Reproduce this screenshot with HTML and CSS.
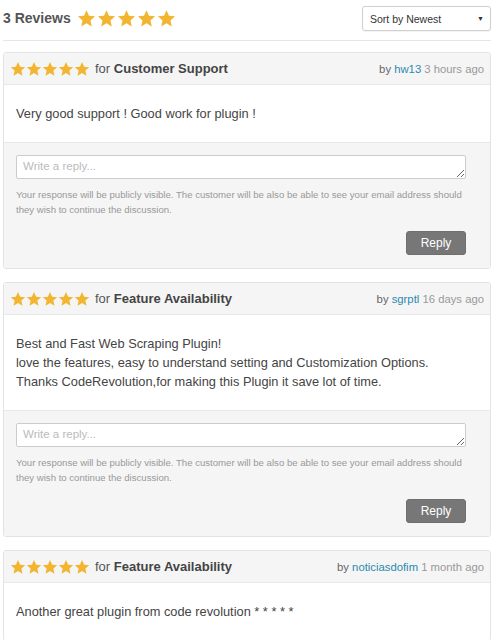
FILE: index.html
```html
<!DOCTYPE html>
<html>
<head>
<meta charset="utf-8">
<link rel="stylesheet" href="styles.css">
</head>
<body>
<svg width="0" height="0" class="defs"><defs><symbol id="star" viewBox="0 0 24 24"><polygon points="12,1.5 15.1,8.6 22.8,9.3 17,14.4 18.7,22 12,18 5.3,22 7,14.4 1.2,9.3 8.9,8.6" fill="#f1b52f"/></symbol></defs></svg>
<div class="page">
  <div class="top">
    <div class="summary">
      <span class="count">3 Reviews</span>
      <span class="stars big">
        <svg><use href="#star"/></svg><svg><use href="#star"/></svg><svg><use href="#star"/></svg><svg><use href="#star"/></svg><svg><use href="#star"/></svg>
      </span>
    </div>
    <div class="sort"><span>Sort by Newest</span><span class="caret">▼</span></div>
  </div>

  <div class="card">
    <div class="card-head">
      <div class="left">
        <span class="stars small"><svg><use href="#star"/></svg><svg><use href="#star"/></svg><svg><use href="#star"/></svg><svg><use href="#star"/></svg><svg><use href="#star"/></svg></span>
        <span class="for">for <b>Customer Support</b></span>
      </div>
      <div class="meta">by <a class="user">hw13</a> <span class="ago">3 hours ago</span></div>
    </div>
    <div class="card-body">Very good support ! Good work for plugin !</div>
    <div class="reply">
      <textarea placeholder="Write a reply..."></textarea>
      <p class="note">Your response will be publicly visible. The customer will be also be able to see your email address should they wish to continue the discussion.</p>
      <div class="actions"><button class="btn">Reply</button></div>
    </div>
  </div>

  <div class="card">
    <div class="card-head">
      <div class="left">
        <span class="stars small"><svg><use href="#star"/></svg><svg><use href="#star"/></svg><svg><use href="#star"/></svg><svg><use href="#star"/></svg><svg><use href="#star"/></svg></span>
        <span class="for">for <b>Feature Availability</b></span>
      </div>
      <div class="meta">by <a class="user">sgrptl</a> <span class="ago">16 days ago</span></div>
    </div>
    <div class="card-body">Best and Fast Web Scraping Plugin!<br>love the features, easy to understand setting and Customization Options.<br>Thanks CodeRevolution,for making this Plugin it save lot of time.</div>
    <div class="reply">
      <textarea placeholder="Write a reply..."></textarea>
      <p class="note">Your response will be publicly visible. The customer will be also be able to see your email address should they wish to continue the discussion.</p>
      <div class="actions"><button class="btn">Reply</button></div>
    </div>
  </div>

  <div class="card">
    <div class="card-head">
      <div class="left">
        <span class="stars small"><svg><use href="#star"/></svg><svg><use href="#star"/></svg><svg><use href="#star"/></svg><svg><use href="#star"/></svg><svg><use href="#star"/></svg></span>
        <span class="for">for <b>Feature Availability</b></span>
      </div>
      <div class="meta">by <a class="user">noticiasdofim</a> <span class="ago">1 month ago</span></div>
    </div>
    <div class="card-body">Another great plugin from code revolution * * * * *</div>
  </div>
</div>
</body>
</html>
```

FILE: styles.css
```css
html, body {
  margin: 0;
  padding: 0;
  background: #fff;
}
body {
  font-family: "Liberation Sans", Arial, sans-serif;
  color: #444;
  overflow: hidden;
}
.defs {
  position: absolute;
  width: 0;
  height: 0;
}
.page {
  padding: 0 3px;
}
.top {
  height: 40px;
  border-bottom: 1px solid #e6e6e6;
  display: flex;
  justify-content: space-between;
  align-items: flex-start;
  margin-bottom: 11px;
}
.summary {
  display: flex;
  align-items: center;
  height: 36px;
}
.count {
  font-size: 14px;
  font-weight: bold;
  color: #555;
  margin-right: 6px;
}
.stars {
  display: inline-flex;
}
.stars svg {
  display: block;
}
.stars.big svg {
  width: 19px;
  height: 19px;
  margin-right: 1px;
}
.stars.small svg {
  width: 16px;
  height: 16px;
  margin-right: 0;
}
.sort {
  margin-top: 6px;
  width: 127px;
  height: 23px;
  border: 1px solid #cfcfcf;
  border-radius: 3px;
  display: flex;
  align-items: center;
  justify-content: space-between;
  font-size: 10.5px;
  color: #333;
  box-shadow: 0 1px 1px rgba(0,0,0,0.05);
}
.sort span:first-child {
  padding-left: 7px;
}
.caret {
  font-size: 7px;
  padding-right: 6px;
  color: #333;
}
.card {
  border: 1px solid #e3e3e3;
  border-radius: 3px;
  margin-bottom: 13px;
  overflow: hidden;
}
.card-head {
  height: 31px;
  background: #f5f5f5;
  border-bottom: 1px solid #e8e8e8;
  display: flex;
  align-items: center;
  justify-content: space-between;
  padding: 0 6px 0 6px;
  font-size: 13px;
}
.left {
  display: flex;
  align-items: center;
}
.for {
  color: #555;
  margin-left: 5px;
}
.for b {
  color: #444;
}
.meta {
  font-size: 11.3px;
  color: #666;
}
.user {
  color: #2a8ab0;
  text-decoration: none;
}
.ago {
  color: #999;
}
.card-body {
  padding: 19px 12px 19px 12px;
  font-size: 12.8px;
  line-height: 19px;
  color: #444;
  background: #fff;
}
.reply {
  background: #f5f5f5;
  border-top: 1px solid #e8e8e8;
  padding: 12px 24px 13px 12px;
}
.reply textarea {
  display: block;
  box-sizing: border-box;
  width: 450px;
  height: 24px;
  border: 1px solid #ccc;
  border-radius: 2px;
  padding: 4px 6px;
  font-family: "Liberation Sans", Arial, sans-serif;
  font-size: 11.5px;
  background: #fff;
  resize: vertical;
  margin: 0;
}
.reply textarea::placeholder {
  color: #bbb;
}
.note {
  margin: 8px 0 0 0;
  font-size: 9.6px;
  line-height: 15px;
  color: #999;
  width: 450px;
}
.actions {
  display: flex;
  justify-content: flex-end;
  width: 450px;
  margin-top: 14px;
}
.btn {
  width: 60px;
  height: 24px;
  background: #777;
  color: #fff;
  border: 1px solid #6e6e6e;
  border-radius: 3px;
  font-family: "Liberation Sans", Arial, sans-serif;
  font-size: 12px;
  padding: 0;
}
```
